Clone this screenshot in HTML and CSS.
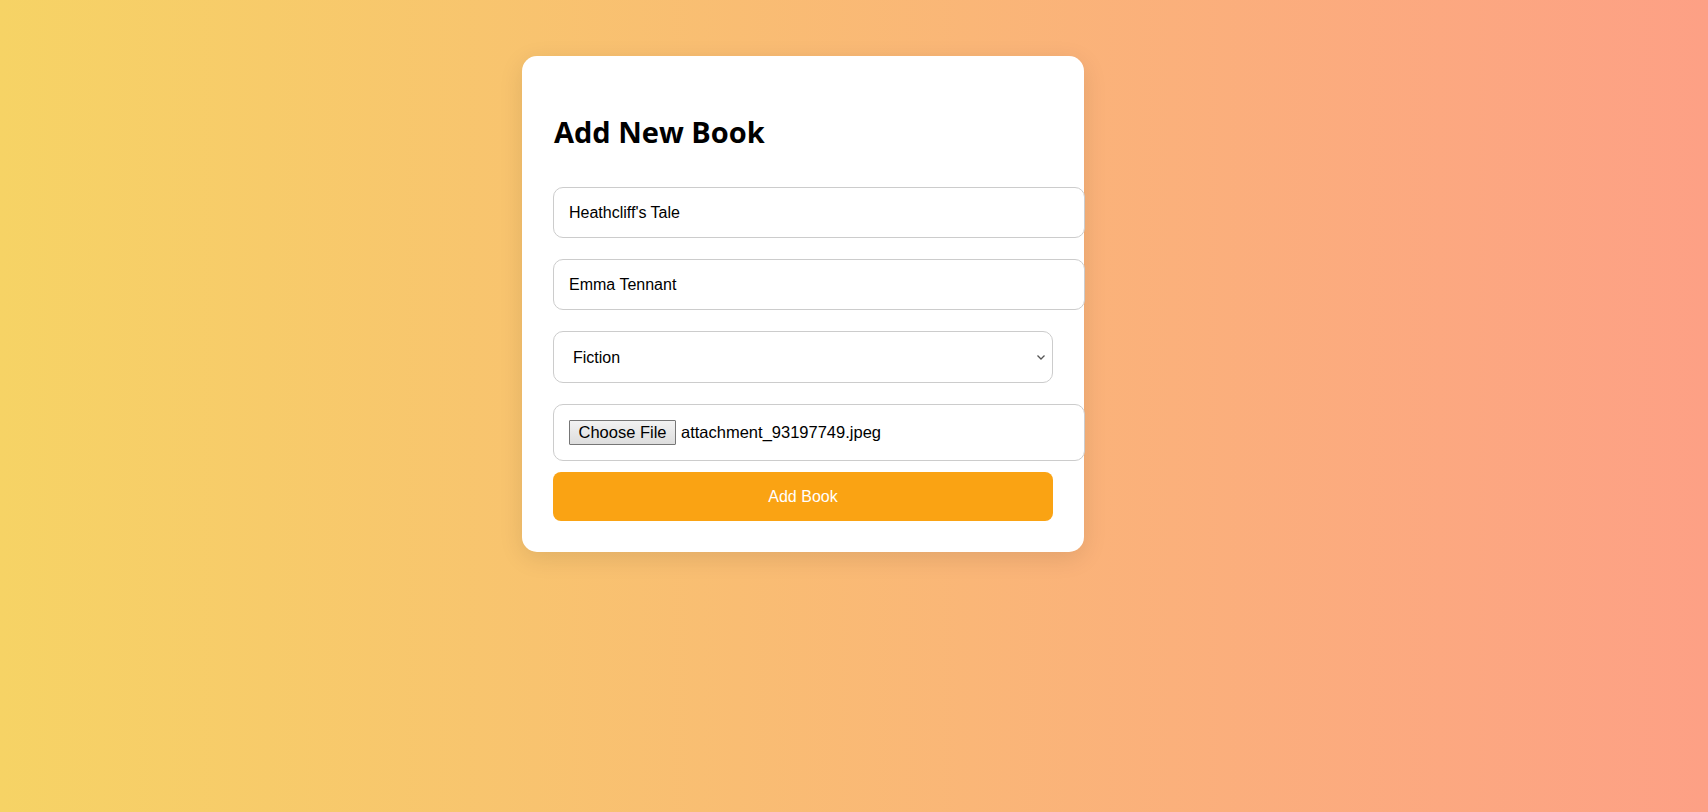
FILE: index.html
```html
<!DOCTYPE html>
<html lang="en">
<head>
<meta charset="utf-8">
<title>Add New Book</title>
<link rel="stylesheet" href="styles.css">
</head>
<body>
<main class="page">
  <section class="card">
    <h1 class="title">Add New Book</h1>
    <form class="form">
      <input class="field" type="text" value="Heathcliff's Tale">
      <input class="field" type="text" value="Emma Tennant">
      <div class="select-wrap">
        <select class="select">
          <option>Fiction</option>
        </select>
        <svg class="chevron" width="8" height="5" viewBox="0 0 8 5" aria-hidden="true"><path d="M0.5 0.5 L4 4 L7.5 0.5" fill="none" stroke="#555" stroke-width="1.3"/></svg>
      </div>
      <div class="field file">
        <span class="file-btn">Choose File</span>
        <span class="file-name">attachment_93197749.jpeg</span>
      </div>
      <button class="submit" type="button">Add Book</button>
    </form>
  </section>
</main>
</body>
</html>
```

FILE: styles.css
```css
html, body {
  margin: 0;
  height: 100%;
}
body {
  background: linear-gradient(to right, #f6d365, #fda085);
  font-family: "Liberation Sans", Arial, sans-serif;
}
.page {
  padding-top: 56px;
}
.card {
  width: 500px;
  margin-left: 522px;
  padding: 31px;
  background: #fff;
  border-radius: 15px;
  box-shadow: 0 6px 24px rgba(0, 0, 0, 0.1);
}
.title {
  font-family: "Open Sans", sans-serif;
  font-weight: 700;
  font-size: 29px;
  line-height: 42px;
  margin: 24px 0 34px 1px;
  color: #000;
}
.form {
  display: flex;
  flex-direction: column;
  align-items: flex-start;
}
.field {
  width: 100%;
  box-sizing: content-box;
  padding: 16px 15px;
  border: 1px solid #ccc;
  border-radius: 10px;
  font-family: "Liberation Sans", Arial, sans-serif;
  font-size: 16px;
  line-height: 17px;
  height: 17px;
  color: #000;
  background: #fff;
  margin: 0 0 21px;
  outline: none;
}
.select-wrap {
  position: relative;
  width: 100%;
  margin: 0 0 21px;
}
.select {
  display: block;
  width: 100%;
  box-sizing: border-box;
  -webkit-appearance: none;
  appearance: none;
  padding: 0 30px 0 19px;
  border: 1px solid #ccc;
  border-radius: 10px;
  font-family: "Liberation Sans", Arial, sans-serif;
  font-size: 16px;
  height: 52px;
  color: #000;
  background: #fff;
}
.chevron {
  position: absolute;
  right: 8px;
  top: 24px;
  pointer-events: none;
}
.file {
  display: flex;
  align-items: center;
  height: 25px;
  padding: 15px;
  margin-bottom: 11px;
}
.file-btn {
  display: inline-block;
  box-sizing: border-box;
  width: 107px;
  height: 25px;
  line-height: 23px;
  padding: 0;
  text-align: center;
  border: 1px solid #767676;
  border-radius: 1px;
  background: linear-gradient(#f2f2f2, #dddddd);
  color: #000;
  font-size: 16.5px;
  margin-right: 5px;
}
.file-name {
  font-size: 16.5px;
  color: #000;
}
.submit {
  width: 100%;
  height: 49px;
  border: none;
  border-radius: 8px;
  background: #faa313;
  color: #fff;
  font-family: "Liberation Sans", Arial, sans-serif;
  font-size: 16px;
  cursor: pointer;
}
```
